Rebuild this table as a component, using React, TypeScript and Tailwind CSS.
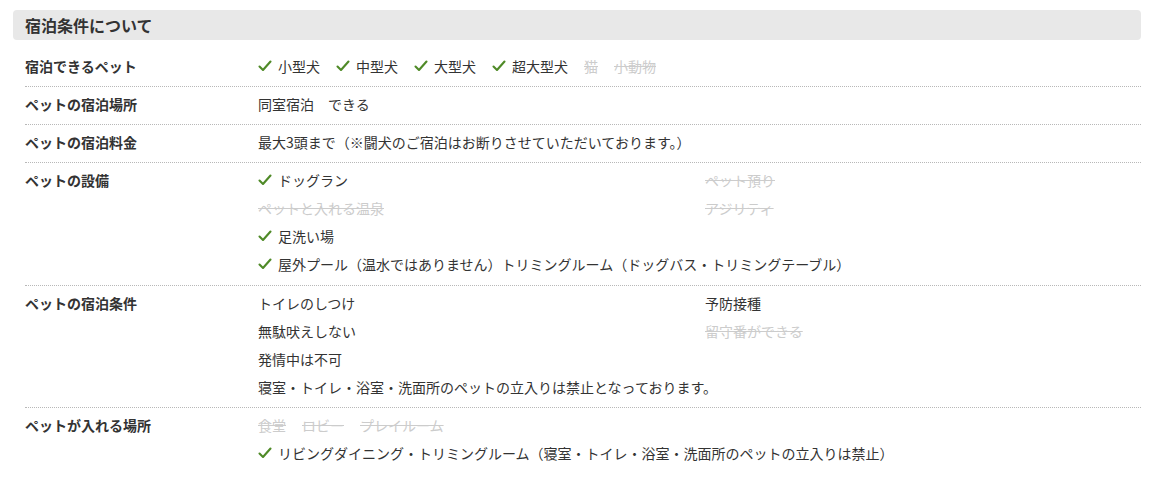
import React from "react";

const Check = () => (
  <svg width="14" height="14" viewBox="0 0 14 14" className="shrink-0 mr-[6px]" aria-hidden="true">
    <polyline points="1.5,7.5 5,11 12.5,2.5" fill="none" stroke="#4f8a27" strokeWidth="2.1" strokeLinecap="round" strokeLinejoin="round" />
  </svg>
);

type Item = { t: string; ok: boolean | null };

const Pill = ({ t, ok }: Item) => {
  if (ok === null) return <span className="inline-flex items-center text-[#333]">{t}</span>;
  return ok ? (
    <span className="inline-flex items-center text-[#333]">
      <Check />
      {t}
    </span>
  ) : (
    <span className="inline-flex items-center text-[#cccccc] line-through decoration-[#cccccc]">{t}</span>
  );
};

const Row = ({ label, children, last = false }: { label: string; children: React.ReactNode; last?: boolean }) => (
  <div
    className={
      last
        ? "flex pt-[7px] pb-[10px] leading-[20px]"
        : "flex border-b border-dotted border-[#b8b8b8] pt-[7px] pb-[10px] leading-[20px]"
    }
  >
    <div className="w-[233px] shrink-0 font-bold text-[#333]">{label}</div>
    <div className="flex-1 min-w-0">{children}</div>
  </div>
);

export default function App() {
  return (
    <div
      className="bg-white w-[1155px] h-[483px] overflow-hidden pt-[10px] pl-[13px] pr-[14px] text-[14px] text-[#333]"
      style={{ fontFamily: '"Noto Sans CJK JP", "Noto Sans", sans-serif' }}
    >
      <div className="h-[30px] rounded-[4px] bg-[#e8e8e8] flex items-center px-[12px] font-bold text-[16px] text-[#333]">
        宿泊条件について
      </div>
      <div className="ml-[12px] mt-[9px]">
        <Row label="宿泊できるペット">
          <div className="flex flex-wrap gap-x-[16px]">
            <Pill t="小型犬" ok={true} />
            <Pill t="中型犬" ok={true} />
            <Pill t="大型犬" ok={true} />
            <Pill t="超大型犬" ok={true} />
            <Pill t="猫" ok={false} />
            <Pill t="小動物" ok={false} />
          </div>
        </Row>
        <Row label="ペットの宿泊場所">
          <span>同室宿泊　できる</span>
        </Row>
        <Row label="ペットの宿泊料金">
          <span>最大3頭まで（※闘犬のご宿泊はお断りさせていただいております。）</span>
        </Row>
        <Row label="ペットの設備">
          <div className="grid grid-cols-[447px_1fr] gap-y-[8px]">
            <Pill t="ドッグラン" ok={true} />
            <Pill t="ペット預り" ok={false} />
            <Pill t="ペットと入れる温泉" ok={false} />
            <Pill t="アジリティ" ok={false} />
            <Pill t="足洗い場" ok={true} />
            <div />
            <div className="col-span-2">
              <Pill t="屋外プール（温水ではありません）トリミングルーム（ドッグバス・トリミングテーブル）" ok={true} />
            </div>
          </div>
        </Row>
        <Row label="ペットの宿泊条件">
          <div className="grid grid-cols-[447px_1fr] gap-y-[8px]">
            <Pill t="トイレのしつけ" ok={null} />
            <Pill t="予防接種" ok={null} />
            <Pill t="無駄吠えしない" ok={null} />
            <Pill t="留守番ができる" ok={false} />
            <Pill t="発情中は不可" ok={null} />
            <div />
            <div className="col-span-2">寝室・トイレ・浴室・洗面所のペットの立入りは禁止となっております。</div>
          </div>
        </Row>
        <Row label="ペットが入れる場所" last>
          <div className="flex flex-col gap-y-[8px]">
            <div className="flex gap-x-[16px]">
              <Pill t="食堂" ok={false} />
              <Pill t="ロビー" ok={false} />
              <Pill t="プレイルーム" ok={false} />
            </div>
            <div>
              <Pill t="リビングダイニング・トリミングルーム（寝室・トイレ・浴室・洗面所のペットの立入りは禁止）" ok={true} />
            </div>
          </div>
        </Row>
      </div>
    </div>
  );
}
